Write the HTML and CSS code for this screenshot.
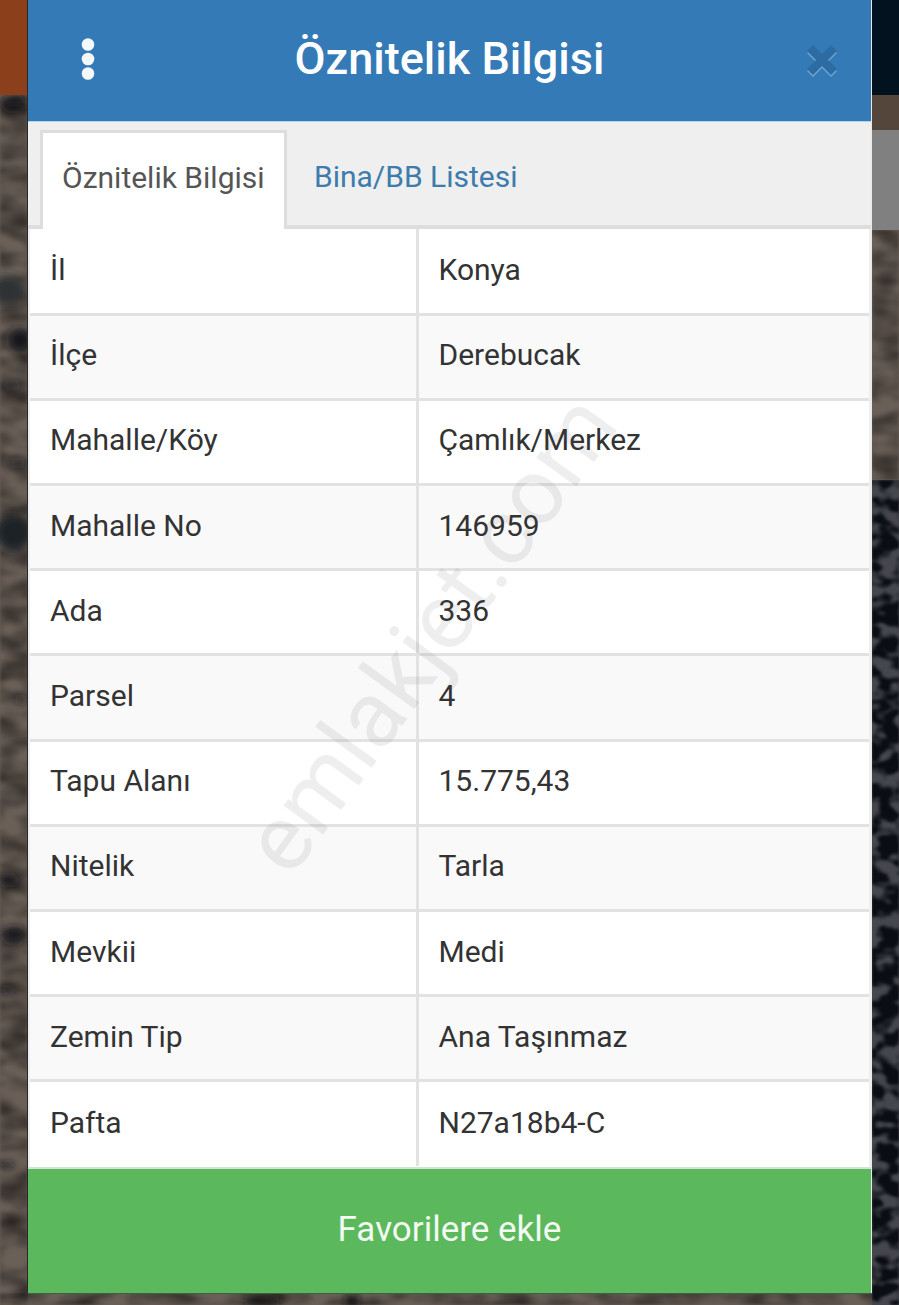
FILE: index.html
```html
<!DOCTYPE html>
<html lang="tr">
<head>
  <meta charset="UTF-8" />
  <title>Öznitelik Bilgisi</title>
  <link rel="stylesheet" href="styles.css">
</head>
<body>
  <!-- uydu goruntusu -->
  <svg class="map" width="899" height="1305" viewBox="0 0 899 1305">
    <defs>
      <filter id="blur" x="-50%" y="-50%" width="200%" height="200%"><feGaussianBlur stdDeviation="4" /></filter>
      <filter id="mottle" x="0" y="0" width="100%" height="100%" color-interpolation-filters="sRGB">
        <feTurbulence type="fractalNoise" baseFrequency="0.05 0.07" numOctaves="2" seed="7" />
        <feColorMatrix type="matrix" values="0 0 0 0 0.04  0 0 0 0 0.05  0 0 0 0 0.08  6 0 0 0 -2.4" />
        <feGaussianBlur stdDeviation="1.2" />
      </filter>
      <filter id="grain" x="0" y="0" width="100%" height="100%" color-interpolation-filters="sRGB">
        <feTurbulence type="fractalNoise" baseFrequency="0.03 0.06" numOctaves="2" seed="3" />
        <feColorMatrix type="matrix" values="0 0 0 0 0.14  0 0 0 0 0.12  0 0 0 0 0.11  1.6 0 0 0 -0.5" />
        <feGaussianBlur stdDeviation="1.5" />
      </filter>
    </defs>
    <rect x="0" y="0" width="899" height="1305" fill="#6a6058" />
    <rect x="0" y="95" width="28" height="1210" filter="url(#grain)" />
    <rect x="872" y="230" width="27" height="250" filter="url(#grain)" />
    <rect x="0" y="1293" width="899" height="12" filter="url(#grain)" />

    <!-- sol serit -->
    <g fill="#14171b" filter="url(#blur)">
      <ellipse cx="14" cy="104" rx="12" ry="7" />
      <ellipse cx="8" cy="290" rx="16" ry="14" fill="#2e3234" />
      <ellipse cx="20" cy="340" rx="12" ry="12" />
      <ellipse cx="12" cy="385" rx="10" ry="3" />
      <ellipse cx="18" cy="463" rx="9" ry="3" />
      <ellipse cx="14" cy="533" rx="18" ry="18" fill="#1a2028" />
      <ellipse cx="21" cy="700" rx="8" ry="3" />
      <ellipse cx="8" cy="880" rx="10" ry="5" />
      <ellipse cx="14" cy="935" rx="12" ry="8" />
      <ellipse cx="8" cy="990" rx="8" ry="3" />
      <ellipse cx="8" cy="1165" rx="7" ry="3" />
    </g>

    <!-- sag serit, koyu bitki ortusu -->
    <rect x="872" y="480" width="27" height="825" fill="#45474d" />
    <rect x="872" y="480" width="27" height="825" filter="url(#mottle)" />

    <!-- alt serit -->
    <g fill="#121214" filter="url(#blur)">
      <ellipse cx="262" cy="1301" rx="20" ry="5" />
      <ellipse cx="352" cy="1301" rx="8" ry="6" />
    </g>

    <rect x="0" y="0" width="28" height="95" fill="#8c3f1b" />
    <rect x="872" y="0" width="27" height="95" fill="#03121f" />
    <rect x="872" y="95" width="27" height="35" fill="#54463a" />
    <rect x="872" y="130" width="27" height="100" fill="#808080" />
  </svg>

  <div class="modal">
    <div class="modal-header">
      <svg class="menu-icon" width="14" height="42" viewBox="0 0 14 42"><circle cx="7" cy="6.5" r="6.3" /><circle cx="7" cy="21" r="6.3" /><circle cx="7" cy="35.5" r="6.3" /></svg>
      <h1>Öznitelik Bilgisi</h1>
      <svg class="close-icon" width="34" height="36" viewBox="0 0 34 36">
        <path class="close-shadow" transform="translate(0 2)" d="M8 1 L17 10 L26 1 L32 7 L23 16 L32 25 L26 31 L17 22 L8 31 L2 25 L11 16 L2 7 Z" />
        <path class="close-main" d="M8 1 L17 10 L26 1 L32 7 L23 16 L32 25 L26 31 L17 22 L8 31 L2 25 L11 16 L2 7 Z" />
      </svg>
    </div>

    <div class="tabs">
      <div class="tab active">Öznitelik Bilgisi</div>
      <div class="tab">Bina/BB Listesi</div>
    </div>

    <div class="table-wrap">
      <table>
        <tr><td>İl</td><td>Konya</td></tr>
        <tr><td>İlçe</td><td>Derebucak</td></tr>
        <tr><td>Mahalle/Köy</td><td>Çamlık/Merkez</td></tr>
        <tr><td>Mahalle No</td><td>146959</td></tr>
        <tr><td>Ada</td><td>336</td></tr>
        <tr><td>Parsel</td><td>4</td></tr>
        <tr><td>Tapu Alanı</td><td>15.775,43</td></tr>
        <tr><td>Nitelik</td><td>Tarla</td></tr>
        <tr><td>Mevkii</td><td>Medi</td></tr>
        <tr><td>Zemin Tip</td><td>Ana Taşınmaz</td></tr>
        <tr><td>Pafta</td><td>N27a18b4-C</td></tr>
      </table>
      <div class="watermark">emlakjet.com</div>
    </div>

    <button type="button" class="btn-fav">Favorilere ekle</button>
  </div>
</body>
</html>
```

FILE: styles.css
```css
* {
  box-sizing: border-box;
}

html, body {
  height: 100%;
}

body {
  margin: 0;
  position: relative;
  overflow: hidden;
  font-family: Roboto, 'Liberation Sans', sans-serif;
  background: #5b524c;
}

.map {
  position: absolute;
  left: 0;
  top: 0;
}

.modal {
  position: relative;
  display: flex;
  flex-direction: column;
  width: 844px;
  height: 1293px;
  margin-left: 28px;
  background: #fff;
  border-right: 1px solid #e8e8e8;
  box-shadow: -1px 0 0 #26282a, 0 1px 0 #3c5f3c;
}

.modal-header {
  position: relative;
  display: flex;
  align-items: center;
  justify-content: center;
  height: 122px;
  flex: none;
  padding-bottom: 5px;
  background: #337ab7;
  border-bottom: 1px solid #b6d4ec;
}

.modal-header h1 {
  margin: 0;
  color: #fff;
  font-size: 45px;
  font-weight: 500;
}

.menu-icon {
  position: absolute;
  left: 53px;
  top: 38px;
  fill: #f4f8fb;
}

.close-icon {
  position: absolute;
  left: 777px;
  top: 44px;
}

.close-main {
  fill: #2d6ca2;
}

.close-shadow {
  fill: #6fa3d2;
}

.tabs {
  display: flex;
  flex: none;
  height: 107px;
  padding: 8px 0 0 12px;
  background: #efefef;
  border-bottom: 4px solid #dddddd;
}

.tab {
  height: 95px;
  padding: 0 28px 0 27px;
  font-size: 30px;
  line-height: 93px;
  white-space: nowrap;
  color: #3d7cac;
}

.tab.active {
  width: 247px;
  padding: 0 19px;
  background: #fff;
  color: #555;
  border: 3px solid #dddddd;
  border-bottom: none;
  margin-bottom: -4px;
  height: 99px;
  line-height: 90px;
}

.table-wrap {
  position: relative;
  flex: 1;
  overflow: hidden;
  border-left: 2px solid #eeeeee;
  border-right: 2px solid #eeeeee;
}

table {
  width: 100%;
  border-collapse: collapse;
  table-layout: fixed;
  font-size: 30px;
  color: #333;
}

tr:nth-child(even) {
  background: #f9f9f9;
}

td {
  height: 85.2px;
  padding: 0 20px 4px;
  border-top: 3px solid #e2e2e2;
  border-left: 3px solid #e2e2e2;
}

tr:first-child td {
  padding-bottom: 2px;
  border-top: none;
}

td:first-child {
  width: 387px;
  border-left: none;
}

.watermark {
  position: absolute;
  left: 400px;
  top: 405px;
  transform: translate(-50%, -50%) rotate(-54deg);
  font-size: 93px;
  color: rgba(90, 90, 90, 0.1);
  white-space: nowrap;
  pointer-events: none;
}

.btn-fav {
  flex: none;
  width: 100%;
  height: 126px;
  padding: 0 0 4px;
  border: none;
  border-top: 2px solid #cfe6d0;
  background: #5cb85c;
  color: #f2faf2;
  font-family: inherit;
  font-size: 35px;
  cursor: pointer;
}
```
